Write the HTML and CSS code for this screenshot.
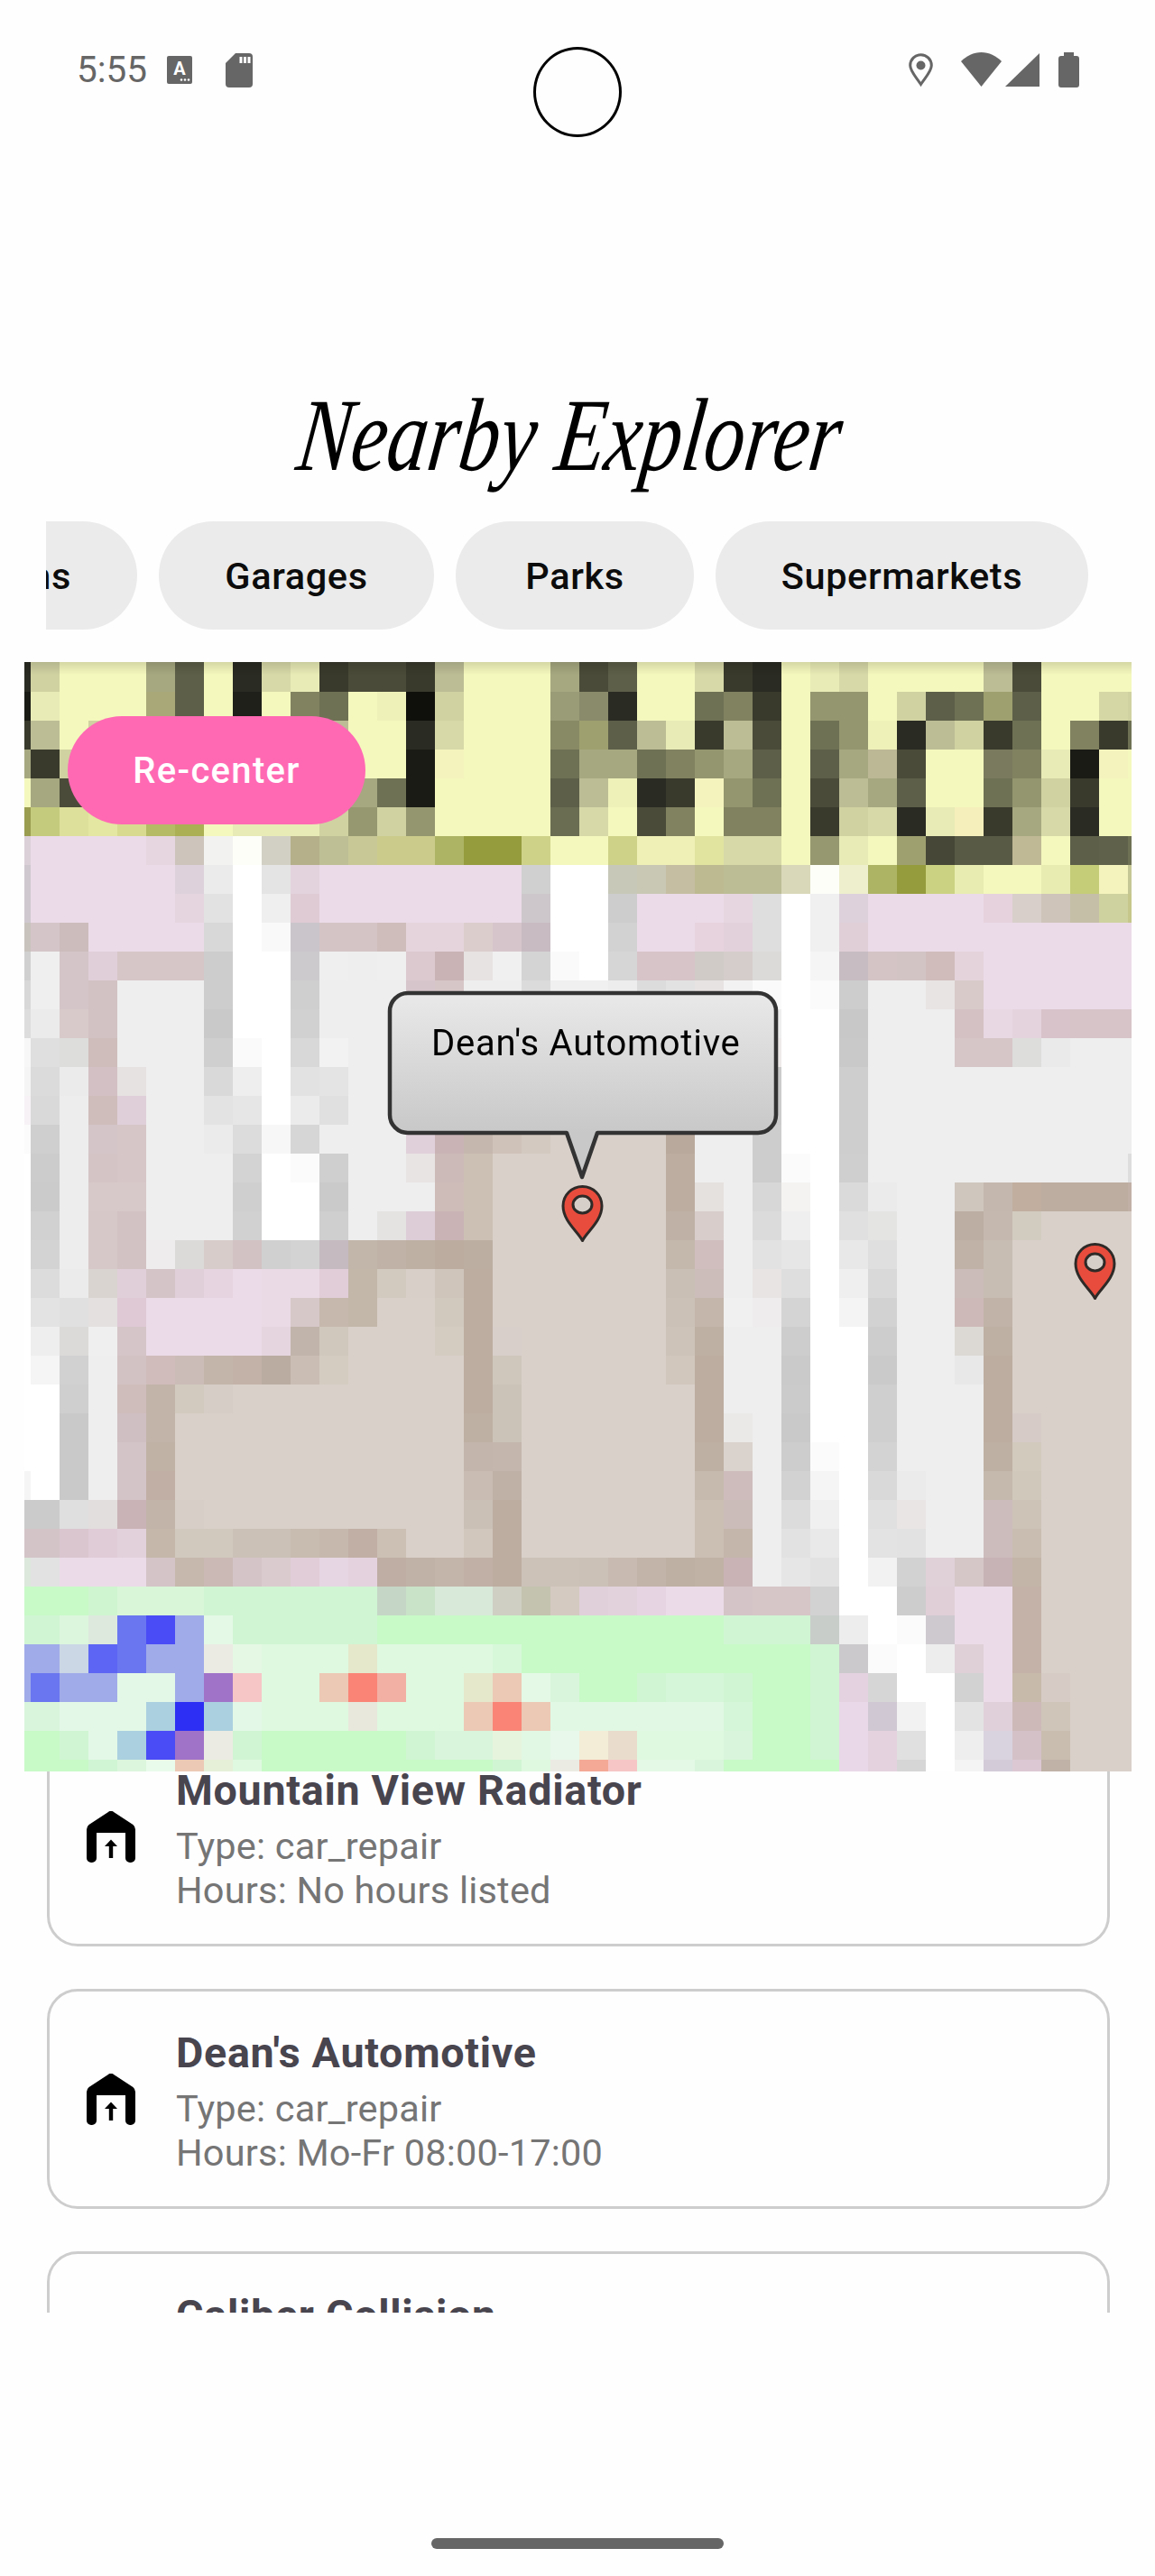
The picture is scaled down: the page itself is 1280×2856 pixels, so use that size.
FILE: index.html
```html
<!DOCTYPE html>
<html lang="en">
<head>
<meta charset="utf-8">
<title>Nearby Explorer</title>
<link rel="stylesheet" href="styles.css">
</head>
<body>
<svg class="defs" width="0" height="0" aria-hidden="true">
  <symbol id="pin" viewBox="0 0 47 65">
    <path d="M23.5 62.5C19 53 2 41 2 24a21.5 21.5 0 0 1 43 0C45 41 28 53 23.5 62.5Z" fill="#e74c3c" stroke="#2e2a28" stroke-width="3" stroke-linejoin="round"/>
    <ellipse cx="23.5" cy="22.5" rx="10.5" ry="9.5" fill="#d6cfc9" stroke="#2e2a28" stroke-width="3"/>
  </symbol>
  <symbol id="garage" viewBox="0 0 54 57">
    <path d="M23.6 1.3a5 5 0 0 1 6.8 0L51.4 15a7 7 0 0 1 2.6 5.5V52a5 5 0 0 1-5 5h-1a5 5 0 0 1-5-5V24H11v28a5 5 0 0 1-5 5H5a5 5 0 0 1-5-5V20.5A7 7 0 0 1 2.6 15Z"/>
    <path d="M27 31.500l7 7.500H29.200v13h-4.400V39H20Z"/>
  </symbol>
</svg>
<div class="screen">
  <header class="status">
    <div class="status-left">
      <span class="time">5:55</span>
      <svg class="ico-a" width="28" height="31" viewBox="0 0 28 31"><rect width="28" height="31" rx="2" fill="#666"/><text x="14" y="21" text-anchor="middle" class="ico-a-text">A</text><circle cx="16" cy="26.500" r="1.300" fill="#fff"/><circle cx="20" cy="26.500" r="1.300" fill="#fff"/><circle cx="24" cy="26.500" r="1.300" fill="#fff"/></svg>
      <svg class="ico-sd" width="30" height="38" viewBox="0 0 30 38"><path d="M11 0H26a4 4 0 0 1 4 4V34a4 4 0 0 1-4 4H4a4 4 0 0 1-4-4V11Z" fill="#666"/><path d="M15.500 4h3v7h-3ZM20 4h3v7h-3ZM24.500 4h3v7h-3Z" fill="#fff"/></svg>
    </div>
    <div class="status-right">
      <svg class="ico-loc" width="27" height="37" viewBox="0 0 27 37"><path d="M13.500 34.500C8 26 1.700 20 1.700 13.500a11.800 11.800 0 0 1 23.600 0C25.300 20 19 26 13.500 34.500Z" fill="none" stroke="#666" stroke-width="3"/><circle cx="13.500" cy="13.500" r="5" fill="#666"/></svg>
      <svg class="ico-wifi" width="45" height="38" viewBox="0 0 45 38"><path d="M0 10C6 4 14 0 22.500 0S39 4 45 10L22.500 38Z" fill="#666"/></svg>
      <svg class="ico-signal" width="38" height="37" viewBox="0 0 38 37"><path d="M38 0V37H0Z" fill="#666"/></svg>
      <svg class="ico-batt" width="23" height="39" viewBox="0 0 23 39"><path d="M6 0H17V4H20a3 3 0 0 1 3 3V36a3 3 0 0 1-3 3H3a3 3 0 0 1-3-3V7a3 3 0 0 1 3-3H6Z" fill="#666"/></svg>
    </div>
    <div class="camera"></div>
  </header>

  <h1 class="title"><span class="title-text">Nearby Explorer</span></h1>

  <nav class="chips">
    <span class="chip chip-first">Gas Stations</span>
    <span class="chip chip-garages">Garages</span>
    <span class="chip chip-parks">Parks</span>
    <span class="chip chip-super">Supermarkets</span>
  </nav>

  <section class="map">
    <canvas id="tiles" class="tiles" width="1227" height="1230"></canvas>
    <div class="map-shade"></div>
    <button class="recenter" type="button">Re-center</button>
    <div class="bubble">
      <svg class="bubble-shape" width="436" height="212" viewBox="0 0 436 212">
        <defs><linearGradient id="bubbleFill" gradientUnits="userSpaceOnUse" x1="0" y1="3" x2="0" y2="158"><stop offset="0" stop-color="#e9e9e9"/><stop offset="1" stop-color="#c8c8c8"/></linearGradient></defs>
        <path d="M23 3H411a20 20 0 0 1 20 20V138a20 20 0 0 1-20 20H233L216 207L199 158H23a20 20 0 0 1-20-20V23A20 20 0 0 1 23 3Z" fill="url(#bubbleFill)" stroke="#333" stroke-width="4.500" stroke-linejoin="round"/>
      </svg>
      <span class="bubble-text">Dean's Automotive</span>
    </div>
    <svg class="pin pin-main" width="47" height="65"><use href="#pin"/></svg>
    <svg class="pin pin-side" width="47" height="65"><use href="#pin"/></svg>
  </section>

  <section class="list">
    <article class="card">
      <svg class="card-icon" width="54" height="57"><use href="#garage"/></svg>
      <div class="card-body">
        <h2 class="card-title">Mountain View Radiator</h2>
        <p class="card-line">Type: car_repair</p>
        <p class="card-line">Hours: No hours listed</p>
      </div>
    </article>
    <article class="card">
      <svg class="card-icon" width="54" height="57"><use href="#garage"/></svg>
      <div class="card-body">
        <h2 class="card-title">Dean's Automotive</h2>
        <p class="card-line">Type: car_repair</p>
        <p class="card-line">Hours: Mo-Fr 08:00-17:00</p>
      </div>
    </article>
    <article class="card">
      <svg class="card-icon" width="54" height="57"><use href="#garage"/></svg>
      <div class="card-body">
        <h2 class="card-title">Caliber Collision</h2>
        <p class="card-line">Type: car_repair</p>
        <p class="card-line">Hours: No hours listed</p>
      </div>
    </article>
  </section>

  <footer class="nav-area"><div class="handle"></div></footer>
</div>
<script src="map.js"></script>
</body>
</html>
```
FILE: styles.css
```css
html, body { margin: 0; padding: 0; background: #fffeff; }
body { font-family: Roboto, "Noto Sans", sans-serif; }
.defs { position: absolute; }
.screen { width: 1280px; height: 2856px; overflow: hidden; display: flex; flex-direction: column; }

.status { position: relative; height: 39px; padding: 58px 84px 0 85px; display: flex; justify-content: space-between; align-items: flex-start; }
.status-left, .status-right { display: flex; align-items: flex-start; }
.time { font-size: 40.5px; line-height: 39px; color: #666; margin-right: 22px; }
.ico-a { margin-top: 4px; margin-right: 37px; }
.ico-a-text { font: 700 20px Roboto, sans-serif; fill: #fff; }
.ico-sd { margin-top: 1px; }
.ico-loc { margin-top: 1px; margin-right: 31px; }
.ico-wifi { margin-right: 4px; }
.ico-signal { margin-top: 1px; margin-right: 21px; }
.camera { position: absolute; left: 591px; top: 52px; width: 92px; height: 94px; border: 3px solid #000; border-radius: 50%; }

.title { margin: 330px 0 0; height: 151px; padding-right: 16px; display: flex; justify-content: center; align-items: flex-start; font: italic 400 115px/112px "Liberation Serif", serif; color: #000; }
.title-text { display: block; white-space: nowrap; transform: scaleX(0.78) skewX(-9deg); transform-origin: center; }

.chips { margin-left: 51px; width: 1155px; padding-right: 23px; box-sizing: content-box; height: 120px; display: flex; justify-content: flex-end; gap: 24px; overflow: hidden; }
.chip { flex: none; box-sizing: border-box; height: 120px; border-radius: 60px; background: #ebebeb; color: #0c0c0c; font-size: 41.5px; font-weight: 500; letter-spacing: 0.6px; line-height: 122px; text-align: center; white-space: nowrap; }
.chip-first { padding: 0 73px; }
.chip-garages { width: 305px; }
.chip-parks { width: 264px; }
.chip-super { width: 413px; }

.map { position: relative; margin: 36px 0 0 27px; width: 1227px; height: 1230px; flex: none; }
.tiles { display: block; width: 1227px; height: 1230px; }
.map-shade { position: absolute; left: 0; right: 0; top: 0; height: 14px; background: linear-gradient(rgba(0,0,0,.13), rgba(0,0,0,0)); }
.recenter { position: absolute; left: 48px; top: 60px; width: 330px; height: 120px; border: 0; border-radius: 60px; background: #ff69b4; color: #fff; font: 500 40px Roboto, sans-serif; letter-spacing: 1.3px; }
.bubble { position: absolute; left: 402px; top: 364px; width: 436px; height: 212px; }
.bubble-shape { display: block; }
.bubble-text { position: absolute; left: 49px; top: 35px; font-size: 40px; line-height: 48px; letter-spacing: 0.75px; color: #000; white-space: nowrap; }
.pin { position: absolute; }
.pin-main { left: 595px; top: 579px; }
.pin-side { left: 1163px; top: 643px; }

.list { flex: none; height: 600px; overflow: hidden; padding: 0 50px 0 52px; }
.card { box-sizing: border-box; height: 244px; margin-bottom: 47px; border: 3px solid #cdcdcd; border-radius: 34px; display: flex; align-items: center; background: #fffeff; }
.card:first-child { margin-top: -50px; }
.card-icon { flex: none; margin-left: 41px; margin-right: 45px; fill: #000; }
.card-body { display: flex; flex-direction: column; padding-top: 5px; }
.card-title { margin: 0 0 10px; font-size: 46.67px; line-height: 54px; letter-spacing: 0.7px; font-weight: 700; color: #49454f; }
.card-line { margin: 0; font-size: 41.5px; line-height: 49px; letter-spacing: 0.2px; color: #757575; }

.nav-area { flex: none; height: 292px; position: relative; }
.handle { position: absolute; left: 478px; top: 250px; width: 324px; height: 12px; border-radius: 6px; background: #666; }
```
FILE: map.js
```js
(function () {
  var names = {
    Y: 'f5f8bd', a: 'e8ebb5', n: 'd8d9a8', b: 'd0d2a2', c: 'bcbd95', d: 'a6a880', e: '94966f',
    f: '808260', g: '6f7155', h: '5d5f48', i: '4a4b38', j: '3a3a2c', k: '2a2b22', l: '1a1b15',
    P: 'ebdbe9', W: 'ffffff', w: 'eeeeee', B: 'd9d0ca', T: 'bdada0',
    G: 'c8fac8', H: 'cff5d2', I: 'def9e0', J: 'e4f8e7', K: 'd9f5dc',
    V: 'a0abea', U: '6a75f0', O: 'ecc9b5'
  };
  var rows = [
    'k b Y*3 d h Y k n a j i i j c Y*3 d i h Y Y n j k Y a n Y*4 c i Y*4',
    'l a Y*3 a8a878 h Y 1f201a Y f g Y eef2b8 0f0f0c b Y*3 9a9c78 8a8b6a k Y Y g f j Y e e Y b h g 9fa070 h Y Y d5d7a5 b',
    'j c Y b e d h Y j a f c Y Y k n Y*3 888a66 9fa070 h c a j c i Y g e eef2b8 k c b j g Y f j g',
    'd j b k j k k i e f g h Y Y l f5f3bd Y*3 g d d g f e d h Y h d bcb795 i Y Y 7a7a5e f a l f5f3bd Y',
    'Y d i d e f g e d g f d d g l Y*4 h c eef2b8 k j f5f3bd e g Y i c d h Y Y g e b j Y Y',
    '9a9c50 c5cb7c dce09b e4e7a2 d8da90 b5bb65 abb055 Y a a a b 969870 b e Y*4 6b6d52 n Y i f Y f f Y j b n k a f5f0bb j d n k Y Y',
    'dcd0d8 P*4 e6d6e0 cdc5bc f2f2f0 fefef8 d2d0c5 b5b08a bfbf95 c7c895 cbcb8c cbcb8c adb565 959c3e 959c3e cdd288 Y Y cdd288 eef0b5 eef0b5 e0e49f n n Y 96986f a Y 9fa070 464736 585a45 585a45 bfb995 Y h 5f614a g',
    'cfc9cf P*5 ddd2dc ebebeb W e4e4e4 e3d3dc P*7 d0d0d0 W W c8c8b8 c8c8b5 c5bea2 bdb990 c c d9d9ba fefef8 eef0cd adb565 959c3e cbd282 e8ecb0 Y Y e8ecb0 c5cd78 f5f3bd c5c895 c9cb95',
    'cfc9cf P*5 e5d5df e2e2e2 W efefef decbd4 P*7 cdc6cb W W cdcdcd P*3 e6d6e0 dedede W f0f0f0 ddd2dc P*4 e6d2dc d9cfca cec4b9 c6bfa8 ced29f c5c88a',
    'c8c4bd d4c6c8 cdbcbc P*4 d8d8d8 W f9f9f9 c9c5ca d4c4c6 d4c4c6 cfbdbb e6d4dc e6d4dc dccdcd d6c6cb c8bcc2 W W d2d2d2 P P e6d3de e2d1db dedede W f0f0f0 e0cfd6 P*10',
    'd0d0d0 efefef d4c6c8 e0cfd8 d6c6c8 d6c6c8 d6c6c8 cdcdcd W W cccacc efefef w efefef dcc9cf cab3b5 e8e3e3 f0f0f0 d4d4d4 fafafa W d6d6d6 d6c4c8 d6c4c8 d0cbc6 d4cdcb dcdad8 W f5f5f5 c7bcc2 d4c4c6 d2c4c4 cfbcbb e5d3dc P*6',
    'd8d8d8 efefef d4c6c8 d2c2c4 w w w cdcdcd W W cfcfcf w w w d6c6cb d6c6c8 w w dbdbdb f0f0f0 f0f0f0 ededed dcdcdc e2e2e2 e8e3e3 f2f2f2 fafafa W fbfbfb cdcdcd w w e8e4e4 d9caca P*6',
    'dddddd ebebeb d8c9ca d2c2c4 w w w c9c9c9 W W d1d1d1 w w w w w w w w w w w w w w w w W W c8c8c8 w w w d3c1c4 e8d8e3 e4d2dd d8c3ca d6c4c8 d6c4c8 d6c4c8',
    'f7f7f7 dfdfdf dddddb cebdbb w w w cfcfcf fafafa W d8d8d8 f2f2f2 w w w w w w w w w w w w w w eeeaea W W c9c9c9 w w w d6c6c8 d6c6c8 dddddb eaeaea w w w',
    'f5f5f5 dbdbdb ebebeb d2c0c4 e6e2e2 w w d9d9d9 w W e2e2e2 e4e4e4 w w w w w w w w w w w w w w cbcbcb W W cecece w*10',
    'f7f2f5 d9d9d9 ededed cebdbb decfd9 w w e3e3e3 e6e6e6 W ebebeb e0e0e0 w w w w w w w w w w w w w w cbcbcb W W cecece w*10',
    'fbfbfb cfcfcf ededed d4c6c8 d6c6c8 w w ebebeb dcdcdc f7f7f7 d6d6d6 w w w e0d0da cab3b5 c5b6ae cfc3b9 d4c9c1 B B B B b9a89c w w cdcdcd W W cecece w*10',
    'W cccccc ededed d4c4c6 d6c6c8 w w w d3d3d3 W fbfbfb cfcfcf w w e8e4e4 ccbab8 ccc0b5 B*6 bdada0 w w cdcdcd fbfbfb W cfcfcf w*9 dddddd',
    'W cbcbcb ededed d7c9ca d7c9ca w w w cfcfcf W W cacaca w w w cdbcb8 ccc0b5 B*6 bdada0 e4e1df w d7d7d7 f5f2f2 W dadada ebebeb w w cfc6bd c4b8ae c1ae9f T T T c1b0a5',
    'W d1d1d1 ededed d6c8c9 d2c2c4 w w w d1d1d1 W W cfcfcf w e5e2e2 dccdd6 cab3b5 ccbfb3 B*6 bfb1a5 d9cdcc w dbdbdb efefef W e0e0e0 e4e4e2 w w bdaea3 c5b9af d2cbc0 B*4',
    'W d3d3d3 ededed d6c8c9 d2c2c4 eeeced dbdad8 d8cccb d2c2c4 d0d0d0 d3d3d3 c5bac0 c2b5aa c0b2a6 bfb0a4 bcac9f bdaea2 B*6 c4b8ac d0bdbe w e2e2e2 e6e6e6 W e8e8e8 dfdfdf w w c0b2a6 c8bdb2 B*5',
    'W dcdcdc ebebeb d9d4d0 e0cfd8 d4c4c8 e0ced8 e6d5e0 P e9dae5 e9dae5 e0cdd8 c3b7aa d3cabf d8d0c8 cfc5ba T B*6 c9bfb4 ccbcba w e8e4e4 dedede W efefef d9d9d9 w w cbbcb9 c8bdb2 B*5',
    'W e3e3e3 e0e0e0 e4e0df dec9d4 P*4 e9dae5 d6c8c9 c6b8ad c3b7aa B B d2c9be T B*6 cbc1b6 c4b6ab f0f0f0 eeeced d4d4d4 W f4f4f4 d2d2d2 w w cdb9b8 c1b3a7 B*5',
    'W eeeeee dbdad8 efefef d5c4c8 P*4 e5d5df c1b4aa d0c8bc B B B d5ccc1 T d8cfcb B*5 cdc3b8 bfb0a4 w w cdcdcd W W cdcdcd w w dcd8d4 bfb0a4 B*5',
    'W f5f5f5 d1d1d1 w d2c2c4 cfbcbb cbbcb7 c4b5aa c3b2a8 baaca0 cabdb3 d5ccc1 B*4 T cfc7bb B*5 d2c7bc T w w cacaca W W cacaca w w e8e8e8 T B*5',
    'W W cfcfcf w cfbdbb c3b4a9 d3cabf d6cdc7 B*8 T cbc2b8 B*5 B T w w cbcbcb W W cfcfcf w w w T B*5',
    'W W c9c9c9 w cfbfc2 c2b4a9 B*10 bfb0a4 cbc2b8 B*5 B T ebe8e8 w c9c9c9 W W cfcfcf w w w T d6cbc6 B*4',
    'W W c9c9c9 w d3c5c7 c0b3a6 B*10 c3b5ab c4b6ad B*6 bfb0a4 d9d2cd w cdcdcd fbfbfb W d3d3d3 w w w bfb0a4 d2cabd B*4',
    'f5f5f5 W c9c9c9 w d3c5c7 c1afa5 B*10 c9bcb2 bfb1a5 B*6 c6baae cdbcbb w d2d2d2 f5f5f5 W d9d9d9 ebebeb w w c5b9ae d1c8bc B*4',
    'cbcbcb cbcbcb dfdfdf e3dede cab3b6 c2b4a9 d8cec8 B*9 cbc0b5 T B*6 cabfb2 cbbcba w dcdcdc f0f0f0 W e0e0e0 e9e5e5 w w cdbcbc cdc3b6 B*4',
    'd3c4c8 d3c4c8 d9c6ce e0ccd6 e2d0da c5b8ab d2c9be d2c9be ccc1b6 ccc1b6 c8bbb0 c6b8ad c1afa6 cbc0b3 B B d1c7bd T B*6 cabfb2 c5b6ac w e2e2e2 e9e9e9 W e3e3e3 e2e2e2 w w cdbcbc c8bdb0 B*4',
    'dde8dd e2e2e2 P P P d4c4c8 c6b8ad cab9b5 d4c4c8 dacbcf e0cdd8 e6d5e2 e4d3de bfaea4 c1b2a7 c4b5ab c0b0a5 T cdc2b8 cdc2b8 ccc1b6 c8bab0 c3b4a9 bfb0a4 c1b2a6 c9b3b5 w e6e6e6 e2e2e2 W f2f2f2 d2d2d2 e0d1d8 d5c6c8 c7b2b5 c3b5a8 B*4',
    'G G G cff4d0 d9f6d9 d9f6d9 d9f6d9 H*6 c6d6c6 c9e3c9 d9e9d9 d9e9d9 cfcfc3 c3c3b0 d4cac1 dfd0da e2d2dc e6d4e2 P P d4c4c8 d6c6c8 d6c6c8 d2d2d2 W W cdcdcd e0cfd7 P P c4b2a8 B*4',
    'H H dcf5dd dce9dc U 4a4df5 V e4fae7 H*5 G*12 H H H c9cdc9 ededed W fbfbfb cdc9cf P P c4b2a8 B*4',
    'V V ccd7e6 5d65f5 U V V ebebe4 e4f8e4 I I I e6e8cc I I I I d8f8da G*10 H cbc9cb fbfbfb W ededed dfd0d8 P c4b2a8 B*4',
    'V U V V J J V a073c9 f6c6c6 I I O fa8576 f2b0a5 I I e6e8cc O e4f9e6 K G G H d6f6d9 d6f6d9 H G G H e4d2e0 d6d6d6 W W d2d2d2 P c7baaa d7cbc5 B*3',
    'K K J J J abd0df 2e2ff5 abd0df J I I I e9e8dc I I I O fa8576 O e1f9e4 e1f9e4 e1f9e4 e1f9e4 e1f9e4 e1f9e4 d6f6d9 G G H e9d8e8 d0c9d3 f2f2f2 W e3e3e3 e0d0da cdb9b8 cfc5b8 B*3',
    'G G H J abd0df 4a4df5 a073c9 ebebe4 H G*5 H K K e6f3dd e1f9e4 e8f8ea f3ecd6 e9dccd I I I K G G H e9d8e8 e4d3df e0e0e0 W w d9d3df d4c1c8 c9bdb0 B*3',
    'G G G d0f5d4 dcf5dd e9fbea O e6f0d9 I G*8 H I ebebe4 f4a896 f6c6c6 e4f9e6 e4f9e6 K G G G G e9d8e8 e4d3df d6d6d6 W f4f4f4 d3cbd8 dcc8d3 c0b2a6 B*3'
  ];
  var ctx = document.getElementById('tiles').getContext('2d');
  var y = 0;
  rows.forEach(function (row, r) {
    var h = r === 0 ? 33 : (r === rows.length - 1 ? 13 : 32);
    var x = 0, c = 0;
    row.split(' ').forEach(function (token) {
      var parts = token.split('*');
      var n = parts[1] ? parseInt(parts[1], 10) : 1;
      var hex = names[parts[0]] || parts[0];
      for (var i = 0; i < n; i++) {
        var w = c === 0 ? 7 : 32;
        ctx.fillStyle = '#' + hex;
        ctx.fillRect(x, y, w, h);
        x += w;
        c++;
      }
    });
    if (x < 1227) { ctx.fillRect(x, y, 1227 - x, h); }
    y += h;
  });
})();
```
